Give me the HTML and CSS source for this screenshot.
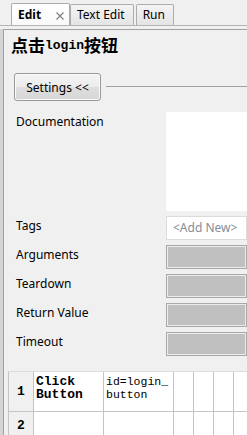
FILE: index.html
```html
<!DOCTYPE html>
<html>
<head>
<meta charset="utf-8">
<link rel="stylesheet" href="styles.css">
</head>
<body>
<div class="tabbar">
  <div class="tab active"><span class="tab-label">Edit</span><svg class="close" width="8" height="8" viewBox="0 0 8 8"><path d="M0.5 0.5L7.5 7.5M7.5 0.5L0.5 7.5" stroke="#808080" stroke-width="1.2" fill="none"/></svg></div>
  <div class="tab">Text Edit</div>
  <div class="tab run">Run</div>
</div>
<div class="pane">
  <div class="frame">
    <h1 class="title">点击<span class="latin">login</span>按钮</h1>
    <div class="settings-row">
      <button class="btn">Settings &lt;&lt;</button>
      <div class="rule"></div>
    </div>
    <div class="form">
      <div class="label">Documentation</div><div class="doc"></div>
      <div class="label">Tags</div><div class="tags">&lt;Add New&gt;</div>
      <div class="label">Arguments</div><div class="field"></div>
      <div class="label">Teardown</div><div class="field"></div>
      <div class="label">Return Value</div><div class="field"></div>
      <div class="label">Timeout</div><div class="field"></div>
    </div>
    <div class="sheet">
      <div class="rowhead">1</div>
      <div class="cell kw">Click Button</div>
      <div class="cell arg">id=login_button</div>
      <div class="cell"></div>
      <div class="cell"></div>
      <div class="cell"></div>
      <div class="cell"></div>
      <div class="rowhead">2</div>
      <div class="cell"></div>
      <div class="cell"></div>
      <div class="cell"></div>
      <div class="cell"></div>
      <div class="cell"></div>
      <div class="cell"></div>
    </div>
  </div>
</div>
</body>
</html>
```

FILE: styles.css
```css
html, body {
  margin: 0;
  height: 100%;
  overflow: hidden;
}
body {
  background: #f0f0f0;
  font-family: "Noto Sans", "Open Sans", sans-serif;
  font-size: 12px;
  color: #000;
}
.tabbar {
  height: 26px;
  box-sizing: border-box;
  display: flex;
  align-items: flex-end;
  padding-left: 11px;
  border-bottom: 1px solid #b4b4b4;
  margin-bottom: 3px;
}
.tab {
  height: 21px;
  box-sizing: border-box;
  border: 1px solid #acacac;
  border-bottom: none;
  border-radius: 2px 2px 0 0;
  background: linear-gradient(#f4f4f4, #e4e4e4);
  padding: 0 8px 0 6px;
  display: flex;
  align-items: center;
  line-height: 16px;
}
.tab.active {
  height: 22px;
  width: 59px;
  background: linear-gradient(#ffffff, #f9f9f9);
  font-weight: bold;
  padding-right: 5px;
}
.tab.run {
  margin-left: 2px;
}
.tab-label {
  flex: 1;
}
.close {
  margin-top: 3px;
}
.pane {
  height: calc(100% - 29px);
  border-left: 3px solid #d4d4d4;
}
.frame {
  height: 100%;
  border-left: 1px solid #a0a0a0;
  border-top: 1px solid #a0a0a0;
}
.title {
  display: flex;
  align-items: center;
  height: 20px;
  margin: 5px 0 0 7px;
  font-family: "Noto Sans CJK SC", sans-serif;
  font-size: 17px;
  line-height: 20px;
  font-weight: bold;
}
.latin {
  font-family: "Liberation Mono", monospace;
  font-size: 13px;
  padding-top: 1px;
}
.settings-row {
  display: flex;
  margin-top: 18px;
  padding-left: 10px;
}
.btn {
  width: 87px;
  height: 28px;
  border: 1px solid #9a9a9a;
  border-radius: 3px;
  background: linear-gradient(#f4f4f4 0%, #ececec 50%, #dedede 51%, #d6d6d6 100%);
  box-shadow: inset 0 0 0 1px #fafafa;
  font-family: "Noto Sans", sans-serif;
  font-size: 12px;
  color: #000;
  padding: 0;
}
.rule {
  flex: 1;
  height: 1px;
  background: #a0a0a0;
  margin: 13px 0 0 5px;
}
.form {
  display: grid;
  grid-template-columns: 150px 1fr;
  row-gap: 5px;
  margin-top: 11px;
  padding-left: 12px;
}
.label {
  line-height: 16px;
  padding-top: 2px;
}
.doc {
  height: 99px;
  background: #fff;
}
.tags {
  height: 24px;
  box-sizing: border-box;
  border: 1px solid #dcdcdc;
  background: #fff;
  color: #858d98;
  padding-left: 6px;
  line-height: 21px;
}
.field {
  height: 24px;
  box-sizing: border-box;
  border: 1px solid #a8a8a8;
  background: #c0c0c0;
  box-shadow: inset 0 0 0 1px #ececec;
}
.sheet {
  display: grid;
  grid-template-columns: 24px 69px 69px 19px 19px 19px 1fr;
  grid-template-rows: 39px 26px;
  gap: 1px;
  background: #c4c4c4;
  border-left: 1px solid #c4c4c4;
  border-top: 1px solid #dcdcdc;
  margin: 15px 0 0 4px;
}
.rowhead {
  background: #f0f0f0;
  display: flex;
  align-items: center;
  justify-content: center;
  font-family: "Liberation Mono", monospace;
  font-weight: bold;
  font-size: 13px;
}
.cell {
  background: #fff;
  padding: 3px 1px 0 2px;
  line-height: 13px;
  font-family: "Liberation Mono", monospace;
  word-break: break-all;
}
.kw {
  font-weight: bold;
  font-size: 13px;
  word-break: normal;
}
.arg {
  font-size: 11.5px;
}
```
